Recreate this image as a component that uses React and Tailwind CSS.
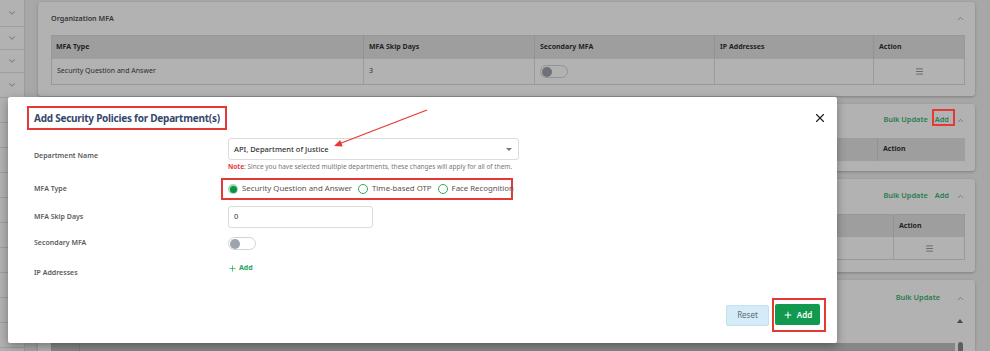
import React from 'react';
import { ChevronDown, ChevronUp, Menu, X, Plus } from 'lucide-react';

const sideRows = [27, 23, 23, 25, 25, 25, 25, 25, 25, 25, 25, 25, 25, 25];

function Toggle() {
  return (
    <div className="w-[28px] h-[13px] rounded-full border border-[#cfd3d8] bg-white flex items-center px-[1px]">
      <div className="w-[10px] h-[10px] rounded-full bg-[#9ea4ad]" />
    </div>
  );
}

function Radio({ checked, label }) {
  return (
    <label className="flex items-center gap-[4px] text-[7.8px] text-[#555] whitespace-nowrap">
      {checked ? (
        <span className="shrink-0 w-[10px] h-[10px] rounded-full bg-[#9fdcb6] flex items-center justify-center">
          <span className="w-[7px] h-[7px] rounded-full bg-[#0d9146]" />
        </span>
      ) : (
        <span className="shrink-0 w-[10px] h-[10px] rounded-full border border-[#2fa862] bg-white" />
      )}
      {label}
    </label>
  );
}

function CardHead({ title, bulk, add, extra = '' }) {
  return (
    <div className="flex items-center h-[14px]">
      {title && <span className="text-[7.2px] font-semibold text-[#505050]">{title}</span>}
      <div className={'ml-auto flex items-center gap-[7px] ' + extra}>
        {bulk && <span className="text-[7.4px] font-semibold text-[#3cb371]">Bulk Update</span>}
        {add && <span className="text-[7.4px] font-semibold text-[#3cb371]">Add</span>}
      </div>
      <ChevronUp size={9} strokeWidth={1.5} className="text-[#777] ml-[7px]" />
    </div>
  );
}

export default function App() {
  return (
    <div className="relative w-[990px] h-[351px] overflow-hidden bg-[#f0f0f0] font-['Noto_Sans',sans-serif]">
      {/* page behind the dialog */}
      <div className="flex h-full">
        <div className="w-[25px] shrink-0 bg-white border-r border-[#dedede] flex flex-col">
          {sideRows.map((h, i) => (
            <div key={i} style={{ height: h }} className="shrink-0 border-b border-[#e2e2e2] flex items-center justify-center">
              {i < 4 && <ChevronDown size={10} strokeWidth={1.5} className="text-[#666]" />}
            </div>
          ))}
        </div>

        <div className="flex-1 pl-[13px] pr-[15px] pt-[2px] flex flex-col gap-[8px]">
          {/* card 1 */}
          <div className="bg-white rounded-[3px] shadow-[0_1px_3px_rgba(0,0,0,0.25)] pl-[13px] pr-[10px] pt-[9px] pb-[11px]">
            <CardHead title="Organization MFA" />
            <div className="mt-[10px] border border-[#dcdcdc] text-[7px]">
              <div className="flex h-[23px] bg-[#e3e3e3] font-bold text-[#333] items-center">
                <div className="w-[312px] pl-[4px] h-full flex items-center border-r border-[#d2d2d2]">MFA Type</div>
                <div className="w-[171px] pl-[5px] h-full flex items-center border-r border-[#d2d2d2]">MFA Skip Days</div>
                <div className="w-[180px] pl-[5px] h-full flex items-center border-r border-[#d2d2d2]">Secondary MFA</div>
                <div className="w-[159px] pl-[5px] h-full flex items-center border-r border-[#d2d2d2]">IP Addresses</div>
                <div className="flex-1 pl-[5px] h-full flex items-center">Action</div>
              </div>
              <div className="flex h-[25px] text-[#444] items-center">
                <div className="w-[312px] pl-[5px] h-full flex items-center border-r border-[#e0e0e0]">Security Question and Answer</div>
                <div className="w-[171px] pl-[5px] h-full flex items-center border-r border-[#e0e0e0]">3</div>
                <div className="w-[180px] pl-[5px] h-full flex items-center border-r border-[#e0e0e0]"><Toggle /></div>
                <div className="w-[159px] h-full border-r border-[#e0e0e0]" />
                <div className="flex-1 h-full flex items-center justify-center"><Menu size={9} strokeWidth={1.6} className="text-[#555]" /></div>
              </div>
            </div>
          </div>

          {/* card 2 */}
          <div className="bg-white rounded-[3px] shadow-[0_1px_3px_rgba(0,0,0,0.25)] pl-[13px] pr-[10px] pt-[9px] pb-[10px]">
            <CardHead bulk add />
            <div className="mt-[11px] flex h-[23px] bg-[#e3e3e3] text-[7px] font-bold text-[#333]">
              <div className="flex-1 border-r border-[#d2d2d2]" />
              <div className="w-[87px] pl-[5px] flex items-center">Action</div>
            </div>
          </div>

          {/* card 3 */}
          <div className="bg-white rounded-[3px] shadow-[0_1px_3px_rgba(0,0,0,0.25)] pl-[13px] pr-[10px] pt-[10px] pb-[12px]">
            <CardHead bulk add />
            <div className="mt-[11px] border border-[#dcdcdc] text-[7px]">
              <div className="flex h-[22px] bg-[#e3e3e3] font-bold text-[#333]">
                <div className="flex-1 border-r border-[#d2d2d2]" />
                <div className="w-[70px] pl-[5px] flex items-center">Action</div>
              </div>
              <div className="flex h-[22px]">
                <div className="flex-1 border-r border-[#e0e0e0]" />
                <div className="w-[70px] flex items-center justify-center"><Menu size={9} strokeWidth={1.6} className="text-[#555]" /></div>
              </div>
            </div>
          </div>

          {/* card 4 */}
          <div className="bg-white rounded-[3px] shadow-[0_1px_3px_rgba(0,0,0,0.25)] pl-[13px] pr-[10px] pt-[11px] flex-1">
            <CardHead bulk extra="mr-[9px]" />
            <div className="mt-[5px] flex">
              <div className="flex-1 flex flex-col">
                <div className="h-[33px]" />
                <div className="flex h-[22px] bg-[#c2c2c2] text-[7px] font-bold text-[#333]">
                  <div className="w-[29px] border-r border-[#b0b0b0]" />
                  <div className="w-[296px] pl-[13px] flex items-center">Name | Email</div>
                  <div className="w-[179px] pl-[13px] flex items-center">MFA Type</div>
                  <div className="w-[123px] pl-[12px] flex items-center">MFA Skip Days</div>
                  <div className="w-[124px] pl-[12px] flex items-center">Secondary MFA</div>
                  <div className="w-[91px] pl-[12px] flex items-center">IP Addresses</div>
                  <div className="flex-1 pl-[12px] flex items-center">Action</div>
                </div>
              </div>
              <div className="w-[10px] flex flex-col items-center">
                <div className="mt-[9px] w-0 h-0 border-l-[3px] border-r-[3px] border-b-[4px] border-l-transparent border-r-transparent border-b-[#666]" />
                <div className="mt-[19px] w-[5px] h-[30px] rounded-full bg-[#888]" />
              </div>
            </div>
          </div>
        </div>
      </div>

      {/* dim */}
      <div className="absolute inset-0 bg-black/30" />

      {/* dialog */}
      <div className="absolute left-[8px] top-[97px] w-[829px] h-[246px] bg-white rounded-[2px] shadow-[0_3px_10px_rgba(0,0,0,0.35)] flex flex-col">
        <div className="flex items-center justify-between pl-[19px] pr-[10px] pt-[9px]">
          <div className="h-[24px] border-2 border-[#e53935] px-[5px] flex items-center">
            <span className="text-[10px] tracking-[-0.25px] font-bold text-[#34476c]">Add Security Policies for Department(s)</span>
          </div>
          <X size={14} strokeWidth={2} className="text-[#222]" />
        </div>

        <div className="pl-[26px] mt-[9px] flex flex-col">
          <div className="flex items-center h-[32px]">
            <div className="w-[194px] pt-[3px] text-[7px] font-semibold text-[#5a5a5a]">Department Name</div>
            <div className="flex flex-col">
              <div className="w-[291px] h-[22px] border border-[#dcdcdc] rounded-[3px] flex items-center pl-[5px] pr-[6px]">
                <span className="text-[7.5px] font-medium text-[#333]">API, Department of Justice</span>
                <span className="ml-auto w-0 h-0 border-l-[3px] border-r-[3px] border-t-[3.5px] border-l-transparent border-r-transparent border-t-[#777]" />
              </div>
              <div className="mt-[2px] text-[6.5px] text-[#777] whitespace-nowrap">
                <span className="font-bold text-[#e53935]">Note</span>: Since you have selected multiple departments, these changes will apply for all of them.
              </div>
            </div>
          </div>

          <div className="flex items-center h-[22px] mt-[7px]">
            <div className="w-[194px] text-[7px] font-semibold text-[#5a5a5a]">MFA Type</div>
            <div className="-ml-[7px] h-[22px] w-[292px] border-2 border-[#e53935] flex items-center gap-[6px] pl-[5px]">
              <Radio checked label="Security Question and Answer" />
              <Radio label="Time-based OTP" />
              <Radio label="Face Recognition" />
            </div>
          </div>

          <div className="flex items-center h-[22px] mt-[6px]">
            <div className="w-[194px] text-[7px] font-semibold text-[#5a5a5a]">MFA Skip Days</div>
            <div className="w-[145px] h-[22px] border border-[#dcdcdc] rounded-[3px] flex items-center pl-[5px]">
              <span className="text-[7.5px] text-[#333]">0</span>
            </div>
          </div>

          <div className="flex items-center h-[21px] mt-[5px]">
            <div className="w-[194px] text-[7px] font-semibold text-[#5a5a5a]">Secondary MFA</div>
            <Toggle />
          </div>

          <div className="flex items-start h-[22px] mt-[8px]">
            <div className="w-[194px] pt-[6px] text-[7px] font-semibold text-[#5a5a5a]">IP Addresses</div>
            <div className="pt-[1px] flex items-center gap-[2px] text-[7px] font-bold text-[#28a860]">
              <Plus size={9} strokeWidth={2} />
              Add
            </div>
          </div>
        </div>

        <div className="mt-auto flex justify-end items-center gap-[3px] pr-[11px] pb-[11px]">
          <button className="w-[43px] h-[21px] rounded-[2px] bg-[#d5ebf7] border border-[#c3e0f1] text-[8px] text-[#5b6b7b]">Reset</button>
          <div className="border-2 border-[#e53935] pt-[4px] pb-[5px] pl-[1px] pr-[4px]">
            <button className="w-[45px] h-[21px] rounded-[2px] bg-[#119a4f] text-white text-[8px] font-semibold flex items-center justify-center gap-[4px]">
              <Plus size={10} strokeWidth={2.5} />
              Add
            </button>
          </div>
        </div>
      </div>

      {/* annotations */}
      <div className="absolute left-[932px] top-[109px] w-[23px] h-[17px] border-2 border-[#e53935]" />
      <svg className="absolute inset-0 pointer-events-none" width="990" height="351">
        <line x1="427" y1="110" x2="340" y2="143.5" stroke="#e53935" strokeWidth="1.3" />
        <polygon points="334,146 342.7,146.4 340.2,139.9" fill="#e53935" />
      </svg>
    </div>
  );
}
